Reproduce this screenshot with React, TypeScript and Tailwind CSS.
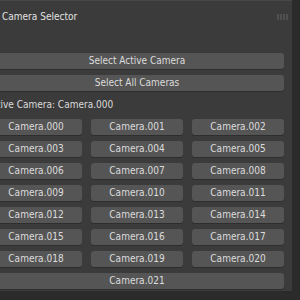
const cameras = Array.from({ length: 21 }, (_, i) => "Camera." + String(i).padStart(3, "0"));

function Btn({ text }: { text: string }) {
  return (
    <button className="h-[16px] rounded-[3px] bg-[#555555] text-[10px] leading-[16px] text-[#dcdcdc] shadow-[0_1px_0_#2e2e2e]">
      {text}
    </button>
  );
}

function DragHandle() {
  const xs = [0.5, 3.5, 6.5, 9.5];
  const ys = [0.5, 2.5, 4.5];
  return (
    <svg width="11" height="6" viewBox="0 0 11 6" className="mr-[4px]">
      {xs.map((x) =>
        ys.map((y) => <rect key={x + "-" + y} x={x} y={y} width="1" height="1" fill="#8c8c8c" />)
      )}
    </svg>
  );
}

export default function App() {
  return (
    <div
      className="flex h-[300px] w-[300px] overflow-hidden bg-[#2b2b2b]"
      style={{ fontFamily: '"DejaVu Sans Condensed", "Liberation Sans", Arial, sans-serif' }}
    >
      <div className="flex h-[291px] w-[292px] flex-col overflow-hidden border-t border-[#474747] bg-[#3b3b3b]">
        <div className="flex h-[31px] items-center justify-between pl-[2px]">
          <span className="text-[10px] text-[#e2e2e2]">Camera Selector</span>
          <DragHandle />
        </div>
        <div className="-ml-[10px] mr-[8px] flex flex-col gap-[6px] pt-[21px]">
          <Btn text="Select Active Camera" />
          <Btn text="Select All Cameras" />
          <div className="-ml-[4px] h-[16px] whitespace-nowrap text-[10px] leading-[16px] text-[#dcdcdc]">
            Active Camera: Camera.000
          </div>
          <div className="grid grid-cols-3 gap-x-[9px] gap-y-[6px]">
            {cameras.map((c) => (
              <Btn key={c} text={c} />
            ))}
          </div>
          <Btn text="Camera.021" />
        </div>
      </div>
    </div>
  );
}
